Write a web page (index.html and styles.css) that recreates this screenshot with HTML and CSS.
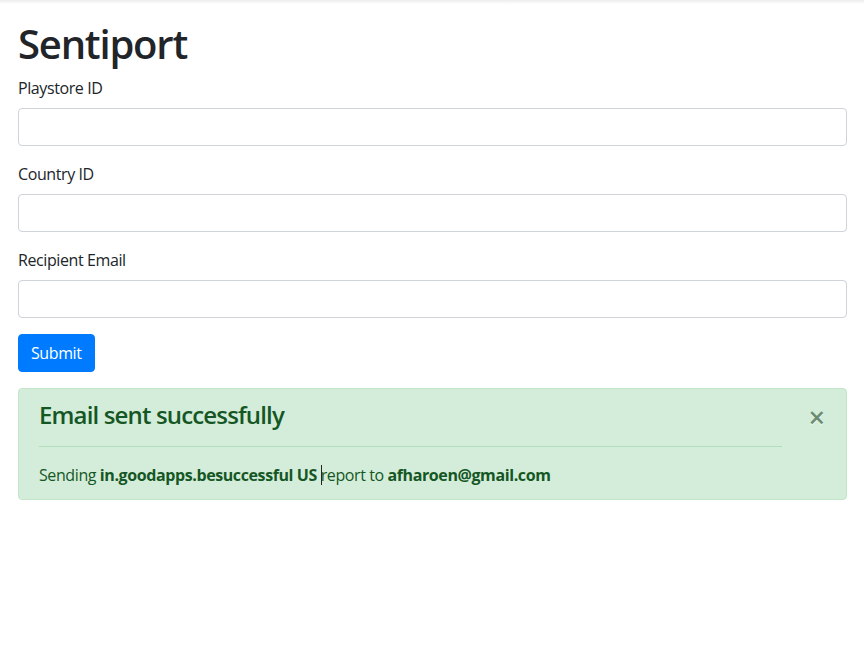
FILE: index.html
```html
<!DOCTYPE html>
<html lang="en">
<head>
<meta charset="utf-8">
<title>Sentiport</title>
<link rel="stylesheet" href="styles.css">
</head>
<body>
<div class="topshade"></div>
<main class="container">
  <h1 class="title">Sentiport</h1>
  <form class="form">
    <div class="form-group">
      <label class="label" for="pid">Playstore ID</label>
      <input class="input" id="pid" type="text">
    </div>
    <div class="form-group">
      <label class="label" for="cid">Country ID</label>
      <input class="input" id="cid" type="text">
    </div>
    <div class="form-group">
      <label class="label" for="email">Recipient Email</label>
      <input class="input" id="email" type="text">
    </div>
    <button class="btn" type="button">Submit</button>
  </form>
  <div class="alert">
    <button class="close" type="button">&times;</button>
    <h4 class="alert-heading">Email sent successfully</h4>
    <hr class="alert-rule">
    <p class="alert-text">Sending <b>in.goodapps.besuccessful US</b> <span class="caret"></span>report to <b>afharoen@gmail.com</b></p>
  </div>
</main>
</body>
</html>
```
FILE: styles.css
```css
* { box-sizing: border-box; }
html, body { margin: 0; padding: 0; }
body {
  font-family: "Open Sans", "Noto Sans", sans-serif;
  font-size: 16px;
  line-height: 1.5;
  letter-spacing: -0.4px;
  color: #212529;
  background: #fff;
}
.topshade {
  height: 4px;
  background: linear-gradient(#ececec, #fff);
}
.container {
  padding: 16px 17px 0 18px;
}
.title {
  margin: 0 0 8px;
  font-size: 40px;
  font-weight: 600;
  line-height: 1.2;
  letter-spacing: -1.2px;
}
.form { margin: 0; }
.form-group { margin-bottom: 16px; }
.label {
  display: inline-block;
  margin-bottom: 8px;
}
.input {
  display: block;
  width: 100%;
  height: 38px;
  padding: 6px 12px;
  font: inherit;
  border: 1px solid #ced4da;
  border-radius: 4px;
  background: #fff;
}
.btn {
  display: inline-block;
  height: 38px;
  padding: 6px 12px;
  font: inherit;
  letter-spacing: -0.4px;
  color: #fff;
  background: #007bff;
  border: 1px solid #007bff;
  border-radius: 4px;
}
.alert {
  position: relative;
  margin-top: 16px;
  padding: 12px 64px 12px 20px;
  background: #d4edda;
  border: 1px solid #c3e6cb;
  border-radius: 4px;
  color: #155724;
}
.alert-heading {
  margin: 0 0 8px;
  font-size: 24px;
  font-weight: 600;
  line-height: 1.2;
  letter-spacing: -0.85px;
}
.alert-rule {
  margin: 16px 0;
  border: 0;
  border-top: 1px solid #b1dfbb;
}
.alert-text { margin: 0; }
.alert-text b { font-weight: 700; }
.caret {
  display: inline-block;
  width: 1px;
  height: 20px;
  margin-right: -1px;
  vertical-align: -4px;
  background: #222;
}
.close {
  position: absolute;
  top: 1px;
  right: 1px;
  padding: 12px 20px;
  font: 600 29px/1 "Open Sans", sans-serif;
  color: #3d6447;
  opacity: .7;
  text-shadow: 0 1px 0 #fff;
  background: transparent;
  border: 0;
}
```
